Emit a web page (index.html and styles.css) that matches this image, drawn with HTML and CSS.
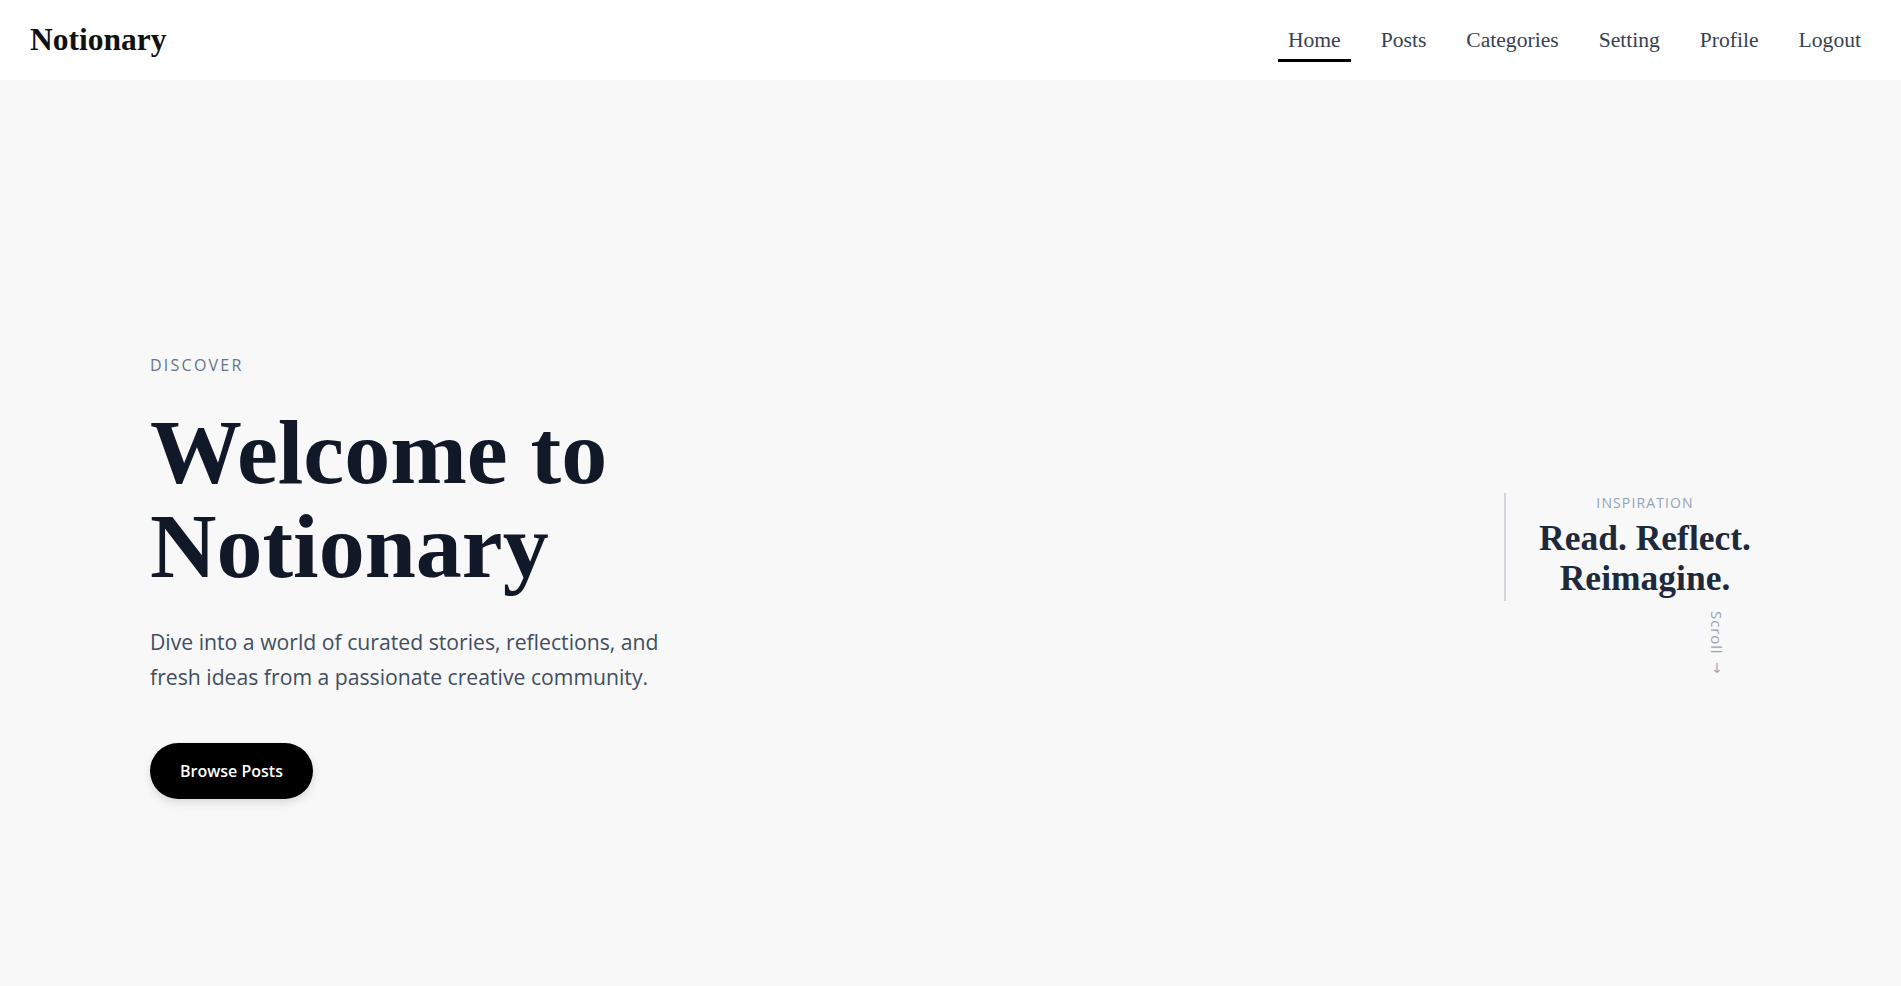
FILE: index.html
```html
<!DOCTYPE html>
<html lang="en">
<head>
  <meta charset="UTF-8" />
  <meta name="viewport" content="width=device-width, initial-scale=1" />
  <title>Notionary</title>
  <link rel="stylesheet" href="styles.css">
</head>
<body>
  <header class="site-header">
    <a class="brand" href="#">Notionary</a>
    <nav class="main-nav">
      <a class="nav-link active" href="#">Home</a>
      <a class="nav-link" href="#">Posts</a>
      <a class="nav-link" href="#">Categories</a>
      <a class="nav-link" href="#">Setting</a>
      <a class="nav-link" href="#">Profile</a>
      <a class="nav-link" href="#">Logout</a>
    </nav>
  </header>

  <main>
    <!-- Hero -->
    <section class="hero">
      <div class="hero-text">
        <p class="eyebrow">Discover</p>
        <h1 class="hero-title">Welcome to Notionary</h1>
        <p class="hero-lead">Dive into a world of curated stories, reflections, and fresh ideas from a passionate creative community.</p>
        <a class="btn-primary" href="#">Browse Posts</a>
      </div>

      <aside class="hero-aside">
        <div class="quote-card">
          <span class="quote-label">Inspiration</span>
          <h2 class="quote-title">Read. Reflect.<br>Reimagine.</h2>
        </div>
        <div class="scroll-hint">
          <span class="scroll-word">Scroll</span>
          <span class="scroll-arrow">&darr;</span>
        </div>
      </aside>
    </section>
  </main>
</body>
</html>
```

FILE: styles.css
```css
body {
  margin: 0;
  padding: 0;
  background-color: #f8f8f8;
  font-family: "Open Sans", "Noto Sans", sans-serif;
  color: #111827;
}

a {
  text-decoration: none;
}

/* Top bar */
.site-header {
  height: 80px;
  padding: 0 30px;
  background: #fff;
  display: flex;
  align-items: center;
  justify-content: space-between;
}

.brand {
  font-family: "Liberation Serif", serif;
  font-weight: bold;
  font-size: 31.5px;
  color: #111;
}

.main-nav {
  display: flex;
  gap: 20px;
}

.nav-link {
  font-family: "Liberation Serif", serif;
  font-size: 21.6px;
  line-height: 24px;
  color: #374151;
  padding: 10px 10px 7px;
  border-bottom: 3px solid transparent;
}

.nav-link.active {
  border-bottom-color: #000;
}

/* Hero: fills the rest of the screen, offset by the header height */
.hero {
  box-sizing: border-box;
  min-height: calc(100vh - 80px);
  padding: 86px 150px 0;
  display: flex;
  align-items: center;
  justify-content: space-between;
}

.hero-text {
  max-width: 560px;
}

.eyebrow {
  margin: 0 0 28px;
  font-size: 16px;
  line-height: 24px;
  letter-spacing: 0.14em;
  text-transform: uppercase;
  color: #64748b;
}

.hero-title {
  margin: 0;
  font-family: "Liberation Serif", serif;
  font-weight: bold;
  font-size: 92px;
  line-height: 94px;
  color: #111827;
}

.hero-lead {
  margin: 31px 0 49px;
  font-size: 21.2px;
  line-height: 35px;
  color: #414e62;
}

.btn-primary {
  display: inline-block;
  padding: 16px 30px;
  border-radius: 999px;
  background: #000;
  color: #fff;
  font-size: 16px;
  line-height: 24px;
  font-weight: 600;
  box-shadow: 0 4px 8px rgba(0,0,0,0.12);
}

/* Quote on the right */
.hero-aside {
  margin-top: 16px;
  display: flex;
  flex-direction: column;
  align-items: flex-end;
}

.quote-card {
  border-left: 2px solid #d1d5db;
  padding: 0 0 3px 33px;
  text-align: center;
}

.quote-label {
  display: block;
  margin-bottom: 5px;
  font-size: 14px;
  line-height: 20px;
  letter-spacing: 0.08em;
  text-transform: uppercase;
  color: #94a3b8;
}

.quote-title {
  margin: 0;
  font-family: "Liberation Serif", serif;
  font-weight: bold;
  font-size: 35.5px;
  line-height: 40px;
  color: #1e293b;
}

.scroll-hint {
  margin: 10px 24px 0 0;
  display: flex;
  flex-direction: column;
  align-items: center;
  gap: 6px;
  color: #9ca3af;
  font-size: 15px;
}

.scroll-word {
  writing-mode: vertical-rl;
  letter-spacing: 0.06em;
}

.scroll-arrow {
  font-family: "DejaVu Sans", sans-serif;
  font-size: 14px;
  line-height: 14px;
}
```
